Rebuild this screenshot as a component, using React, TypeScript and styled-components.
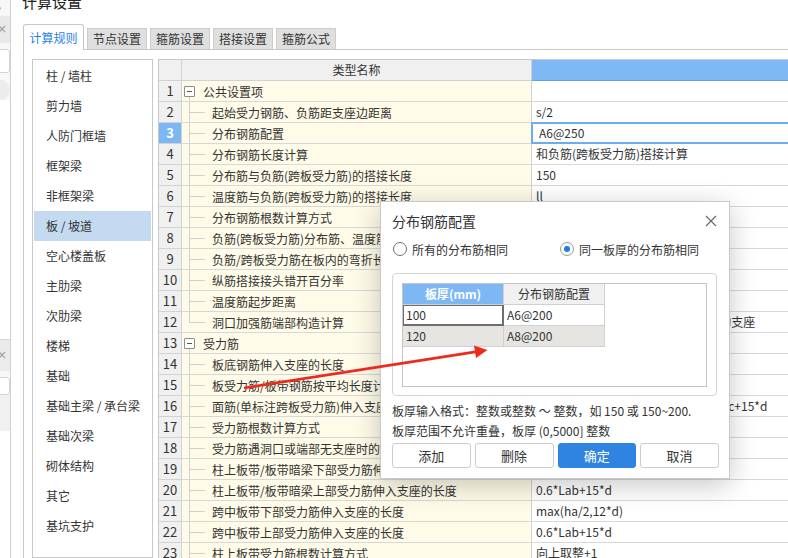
import React from "react";
import styled, { createGlobalStyle, css } from "styled-components";

const GlobalStyle = createGlobalStyle`
  html, body {
    margin: 0;
    padding: 0;
    background: #fff;
  }
  body {
    font-family: "Noto Sans CJK SC", "Noto Sans", sans-serif;
    color: #333;
    overflow: hidden;
  }
  * {
    box-sizing: border-box;
  }
`;

const Screen = styled.div`
  position: relative;
  display: flex;
  width: 788px;
  height: 558px;
  overflow: hidden;
  background: #fff;
`;

/* the edge of the window behind */
const Sliver = styled.div`
  width: 11px;
  flex-shrink: 0;
  display: flex;
  flex-direction: column;
  background: #f7f7f7;
  border-right: 1px solid #d0d0d0;
  overflow: hidden;
`;

const SliverBand = styled.div<{ $h: number; $bg?: string }>`
  height: ${(p) => p.$h}px;
  flex-shrink: 0;
  background: ${(p) => p.$bg || "transparent"};
  color: #9a9a9a;
  font-family: "DejaVu Sans", sans-serif;
  font-size: 12px;
  line-height: ${(p) => p.$h}px;
  text-indent: -3px;
`;

const SliverField = styled.div<{ $h: number }>`
  height: ${(p) => p.$h}px;
  flex-shrink: 0;
  margin: 6px 0 0 -6px;
  border: 1px solid #d4d4d4;
  border-radius: 3px;
  background: #fff;
`;

const SliverKnob = styled.div`
  width: 20px;
  height: 20px;
  flex-shrink: 0;
  margin: 7px 0 0 -10px;
  border-radius: 50%;
  background: #ececec;
`;

const SliverFill = styled.div`
  flex: 1;
  background: #fff;
`;

const Main = styled.div`
  flex: 1;
  display: flex;
  flex-direction: column;
  min-width: 0;
`;

const Title = styled.div`
  height: 24px;
  padding-left: 11px;
  font-size: 15px;
  line-height: 4px;
  color: #222;
`;

const TabRow = styled.div`
  position: relative;
  z-index: 1;
  display: flex;
  align-items: flex-end;
  gap: 3px;
  height: 25px;
  padding-left: 12px;
`;

const Tab = styled.div<{ $active?: boolean }>`
  width: 60px;
  height: 21px;
  border: 1px solid #cdcdcd;
  border-bottom: none;
  background: #dfdfdf;
  font-size: 12px;
  line-height: 20px;
  text-align: center;
  color: #333;
  ${(p) =>
    p.$active &&
    css`
      width: 61px;
      height: 26px;
      margin-bottom: -1px;
      background: #fff;
      border-color: #c6c6c6;
      border-radius: 3px 3px 0 0;
      color: #2b7fe3;
      line-height: 25px;
    `}
`;

const Panel = styled.div`
  flex: 1;
  display: flex;
  gap: 5px;
  min-height: 0;
  margin-left: 12px;
  padding: 9px 0 0 8px;
  border-left: 1px solid #c8c8c8;
  border-top: 1px solid #c8c8c8;
`;

const List = styled.div`
  width: 121px;
  flex-shrink: 0;
  padding: 1px;
  border: 1px solid #c8c8c8;
`;

const ListItem = styled.div<{ $selected?: boolean }>`
  height: 30px;
  padding-left: 12px;
  font-size: 12px;
  line-height: 30px;
  color: #333;
  background: ${(p) => (p.$selected ? "#c4daf0" : "transparent")};
`;

const Table = styled.div`
  width: 660px;
  flex-shrink: 0;
  display: grid;
  grid-template-columns: 23px 350px 1fr;
  grid-auto-rows: 21px;
  align-content: start;
  border-left: 1px solid #c8c8c8;
  border-top: 1px solid #c8c8c8;
  font-size: 12px;
`;

const HeadCell = styled.div<{ $blue?: boolean }>`
  border-right: 1px solid #d2d2d2;
  border-bottom: 1px solid ${(p) => (p.$blue ? "#5d9fe8" : "#d2d2d2")};
  background: ${(p) => (p.$blue ? "#7fb9f5" : "#f0f0f0")};
  text-align: center;
  line-height: 20px;
  color: #333;
`;

const NumCell = styled.div<{ $active?: boolean }>`
  border-right: 1px solid #d2d2d2;
  border-bottom: 1px solid #d2d2d2;
  background: ${(p) => (p.$active ? "#7cb7f4" : "#f0f0f0")};
  color: ${(p) => (p.$active ? "#fff" : "#333")};
  font-weight: ${(p) => (p.$active ? 700 : 400)};
  font-size: 13px;
  line-height: 20px;
  text-align: center;
`;

const NameCell = styled.div<{ $group?: boolean; $last?: boolean }>`
  position: relative;
  display: flex;
  align-items: center;
  padding-left: ${(p) => (p.$group ? 2 : 30)}px;
  border-right: 1px solid #d2d2d2;
  border-bottom: 1px solid #d8d8d8;
  background: #fefbe8;
  color: #333;
  white-space: nowrap;
  overflow: hidden;
  ${(p) =>
    p.$group
      ? css`
          &::before {
            content: "";
            position: absolute;
            left: 7px;
            top: 15px;
            bottom: -1px;
            border-left: 1px solid #d0d0d0;
          }
        `
      : css`
          &::before {
            content: "";
            position: absolute;
            left: 7px;
            top: 0;
            bottom: ${p.$last ? "50%" : "-1px"};
            border-left: 1px solid #d0d0d0;
          }
          &::after {
            content: "";
            position: absolute;
            left: 7px;
            top: 50%;
            width: 16px;
            border-top: 1px solid #d0d0d0;
          }
        `}
`;

const ExpandBox = styled.span`
  position: relative;
  z-index: 1;
  width: 11px;
  height: 11px;
  margin-right: 8px;
  border: 1px solid #8c8c8c;
  border-radius: 1px;
  background: #fff;
  display: flex;
  align-items: center;
  justify-content: center;
  &::before {
    content: "";
    width: 5px;
    border-top: 1px solid #555;
  }
`;

const ValueCell = styled.div<{ $editing?: boolean }>`
  padding-left: 4px;
  border-bottom: 1px solid #d8d8d8;
  background: #fff;
  color: #333;
  line-height: 20px;
  white-space: nowrap;
  overflow: hidden;
  ${(p) =>
    p.$editing &&
    css`
      position: relative;
      margin: -1px 0 0 -1px;
      padding-left: 6px;
      border: 2px solid #6eabef;
      line-height: 18px;
    `}
`;

/* dialog */
const Dialog = styled.div`
  position: absolute;
  left: 380px;
  top: 201px;
  z-index: 5;
  width: 350px;
  height: 278px;
  display: flex;
  flex-direction: column;
  padding: 0 12px 0 11px;
  border: 1px solid #c9c9c9;
  background: #fff;
  box-shadow: 0 6px 26px rgba(0, 0, 0, 0.22);
`;

const DialogHead = styled.div`
  height: 38px;
  display: flex;
  align-items: center;
  justify-content: space-between;
`;

const DialogTitle = styled.div`
  font-size: 14px;
  color: #333;
`;

const CloseIcon = styled.svg`
  width: 12px;
  height: 12px;
`;

const RadioRow = styled.div`
  display: flex;
  align-items: center;
  height: 18px;
`;

const RadioLabel = styled.label<{ $w?: number }>`
  display: flex;
  align-items: center;
  gap: 5px;
  width: ${(p) => (p.$w ? `${p.$w}px` : "auto")};
  font-size: 12px;
  color: #333;
`;

const RadioDot = styled.span<{ $checked?: boolean }>`
  width: 14px;
  height: 14px;
  border-radius: 50%;
  border: 1px solid ${(p) => (p.$checked ? "#9a9a9a" : "#707070")};
  display: flex;
  align-items: center;
  justify-content: center;
  margin-left: 1px;
  &::after {
    content: "";
    width: 6px;
    height: 6px;
    border-radius: 50%;
    background: ${(p) => (p.$checked ? "#1f7be6" : "transparent")};
  }
`;

const GroupBox = styled.div`
  margin-top: 15px;
  height: 123px;
  padding: 9px;
  border: 1px solid #d4d4d4;
  border-radius: 4px;
`;

const InnerArea = styled.div`
  height: 104px;
  border: 1px solid #c4c4c4;
  display: grid;
  grid-template-columns: 101px 101px;
  grid-auto-rows: 21px;
  align-content: start;
  font-size: 12px;
`;

const InnerHead = styled.div<{ $blue?: boolean }>`
  border-right: 1px solid #d0d0d0;
  border-bottom: 1px solid #d0d0d0;
  background: ${(p) => (p.$blue ? "#7db8f5" : "#f0f0f0")};
  color: ${(p) => (p.$blue ? "#fff" : "#333")};
  font-weight: ${(p) => (p.$blue ? 700 : 400)};
  text-align: center;
  line-height: 20px;
`;

const InnerCell = styled.div<{ $shade?: boolean; $focus?: boolean }>`
  padding-left: 3px;
  border-right: 1px solid #d0d0d0;
  border-bottom: 1px solid #d0d0d0;
  background: ${(p) => (p.$shade ? "#e7e5e1" : "#fff")};
  color: #333;
  line-height: 20px;
  ${(p) =>
    p.$focus &&
    css`
      padding-left: 2px;
      border: 1px solid #6e6e6e;
      border-width: 1px 2px 2px 1px;
      line-height: 18px;
    `}
`;

const Hint = styled.div`
  margin-top: 5px;
  font-size: 12px;
  line-height: 20px;
  color: #333;
  white-space: nowrap;
`;

const ButtonRow = styled.div`
  display: grid;
  grid-template-columns: repeat(4, 1fr);
  gap: 4px;
  margin: 2px -2px 0 0;
`;

const Button = styled.div<{ $primary?: boolean }>`
  height: 25px;
  border: 1px solid ${(p) => (p.$primary ? "#2e84e0" : "#cdcdcd")};
  border-radius: 3px;
  background: ${(p) => (p.$primary ? "#2e84e0" : "#fff")};
  color: ${(p) => (p.$primary ? "#fff" : "#333")};
  font-size: 13px;
  line-height: 23px;
  text-align: center;
`;

const ArrowLayer = styled.svg`
  position: absolute;
  left: 0;
  top: 0;
  z-index: 9;
  pointer-events: none;
`;

type Row = { name: string; value?: string; group?: boolean; last?: boolean };

const rows: Row[] = [
  { name: "公共设置项", group: true },
  { name: "起始受力钢筋、负筋距支座边距离", value: "s/2" },
  { name: "分布钢筋配置", value: "A6@250" },
  { name: "分布钢筋长度计算", value: "和负筋(跨板受力筋)搭接计算" },
  { name: "分布筋与负筋(跨板受力筋)的搭接长度", value: "150" },
  { name: "温度筋与负筋(跨板受力筋)的搭接长度", value: "ll" },
  { name: "分布钢筋根数计算方式", value: "向下取整+1" },
  { name: "负筋(跨板受力筋)分布筋、温度筋是否带弯勾", value: "否" },
  { name: "负筋/跨板受力筋在板内的弯折长度", value: "板厚-2*保护层" },
  { name: "纵筋搭接接头错开百分率", value: "50%" },
  { name: "温度筋起步距离", value: "s" },
  { name: "洞口加强筋端部构造计算", value: "设计洞口边长度加锚固,伸入到两侧的支座", last: true },
  { name: "受力筋", group: true },
  { name: "板底钢筋伸入支座的长度", value: "max(ha/2,5*d)" },
  { name: "板受力筋/板带钢筋按平均长度计算", value: "否" },
  { name: "面筋(单标注跨板受力筋)伸入支座的锚固长度", value: "能直锚就直锚,否则按公式计算ha-bhc+15*d" },
  { name: "受力筋根数计算方式", value: "向上取整+1" },
  { name: "受力筋遇洞口或端部无支座时的弯折长度", value: "板厚-2*保护层" },
  { name: "柱上板带/板带暗梁下部受力筋伸入支座的长度", value: "ha-bhc+15*d" },
  { name: "柱上板带/板带暗梁上部受力筋伸入支座的长度", value: "0.6*Lab+15*d" },
  { name: "跨中板带下部受力筋伸入支座的长度", value: "max(ha/2,12*d)" },
  { name: "跨中板带上部受力筋伸入支座的长度", value: "0.6*Lab+15*d" },
  { name: "柱上板带受力筋根数计算方式", value: "向上取整+1" },
];

const categories = [
  "柱 / 墙柱",
  "剪力墙",
  "人防门框墙",
  "框架梁",
  "非框架梁",
  "板 / 坡道",
  "空心楼盖板",
  "主肋梁",
  "次肋梁",
  "楼梯",
  "基础",
  "基础主梁 / 承台梁",
  "基础次梁",
  "砌体结构",
  "其它",
  "基坑支护",
];

const tabs = ["计算规则", "节点设置", "箍筋设置", "搭接设置", "箍筋公式"];

const SLAB_ROWS = [
  { thick: "100", conf: "A6@200" },
  { thick: "120", conf: "A8@200" },
];

const RuleTable: React.FC = () => {
  return (
    <Table>
      <HeadCell />
      <HeadCell>类型名称</HeadCell>
      <HeadCell $blue />
      {rows.map((r, i) => (
        <React.Fragment key={i}>
          <NumCell $active={i === 2}>{i + 1}</NumCell>
          <NameCell $group={r.group} $last={r.last}>
            {r.group && <ExpandBox />}
            {r.name}
          </NameCell>
          <ValueCell $editing={i === 2}>{r.value}</ValueCell>
        </React.Fragment>
      ))}
    </Table>
  );
};

const SlabDialog: React.FC = () => {
  return (
    <Dialog>
      <DialogHead>
        <DialogTitle>分布钢筋配置</DialogTitle>
        <CloseIcon viewBox="0 0 12 12">
          <path d="M1 1L11 11M11 1L1 11" stroke="#666" strokeWidth="1.1" fill="none" />
        </CloseIcon>
      </DialogHead>
      <RadioRow>
        <RadioLabel $w={167}>
          <RadioDot />
          所有的分布筋相同
        </RadioLabel>
        <RadioLabel>
          <RadioDot $checked />
          同一板厚的分布筋相同
        </RadioLabel>
      </RadioRow>
      <GroupBox>
        <InnerArea>
          <InnerHead $blue>板厚(mm)</InnerHead>
          <InnerHead>分布钢筋配置</InnerHead>
          {SLAB_ROWS.map((s, i) => (
            <React.Fragment key={s.thick}>
              <InnerCell $shade={i === 1} $focus={i === 0}>
                {s.thick}
              </InnerCell>
              <InnerCell $shade={i === 1}>{s.conf}</InnerCell>
            </React.Fragment>
          ))}
        </InnerArea>
      </GroupBox>
      <Hint>
        板厚输入格式：整数或整数 ～ 整数，如 150 或 150~200.
        <br />
        板厚范围不允许重叠，板厚 (0,5000] 整数
      </Hint>
      <ButtonRow>
        <Button>添加</Button>
        <Button>删除</Button>
        <Button $primary>确定</Button>
        <Button>取消</Button>
      </ButtonRow>
    </Dialog>
  );
};

export default function App() {
  return (
    <>
      <GlobalStyle />
      <Screen>
        <Sliver>
          <SliverBand $h={16}>›</SliverBand>
          <SliverBand $h={27} $bg="#e9e9e9">×</SliverBand>
          <SliverField $h={24} />
          <SliverKnob />
          <SliverFill />
          <SliverBand $h={1} $bg="#d6d6d6" />
          <SliverBand $h={31} $bg="#ebebeb">×</SliverBand>
          <SliverField $h={18} />
          <SliverBand $h={36} $bg="#f0f0f0" />
          <SliverBand $h={127} $bg="#fff" />
        </Sliver>
        <Main>
          <Title>计算设置</Title>
          <TabRow>
            {tabs.map((t, i) => (
              <Tab key={t} $active={i === 0}>
                {t}
              </Tab>
            ))}
          </TabRow>
          <Panel>
            <List>
              {categories.map((c) => (
                <ListItem key={c} $selected={c === "板 / 坡道"}>
                  {c}
                </ListItem>
              ))}
            </List>
            <RuleTable />
          </Panel>
        </Main>
        <SlabDialog />
        <ArrowLayer width="788" height="558" viewBox="0 0 788 558">
          <line x1="244" y1="388" x2="477" y2="351.6" stroke="#ee2a1e" strokeWidth="2.6" />
          <polygon points="487.5,350 476,358 474,345.6" fill="#ee2a1e" />
        </ArrowLayer>
      </Screen>
    </>
  );
}
